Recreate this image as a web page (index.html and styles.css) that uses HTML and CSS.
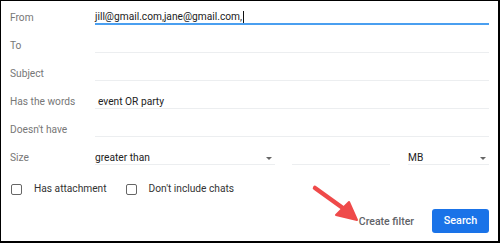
FILE: index.html
```html
<!DOCTYPE html>
<html>
<head>
<meta charset="utf-8">
<link rel="stylesheet" href="styles.css">
</head>
<body>
<div class="frame">
  <div class="rows">
    <div class="row"><span class="label">From</span><div class="field active"><span class="val">jill@gmail.com,jane@gmail.com,</span><span class="caret"></span></div></div>
    <div class="row"><span class="label">To</span><div class="field"></div></div>
    <div class="row"><span class="label">Subject</span><div class="field"></div></div>
    <div class="row"><span class="label">Has the words</span><div class="field"><span class="val words">event OR party</span></div></div>
    <div class="row"><span class="label">Doesn't have</span><div class="field"></div></div>
    <div class="row"><span class="label">Size</span>
      <div class="sizes">
        <div class="field select s1"><span class="val">greater than</span><span class="tri"></span></div>
        <div class="field s2"></div>
        <div class="field select s3"><span class="val">MB</span><span class="tri"></span></div>
      </div>
    </div>
  </div>
  <div class="checks">
    <label class="check"><span class="box"></span><span>Has attachment</span></label>
    <label class="check"><span class="box"></span><span>Don't include chats</span></label>
  </div>
  <div class="actions">
    <span class="link">Create filter</span>
    <span class="btn">Search</span>
  </div>
  <svg class="arrow" width="60" height="45" viewBox="0 0 60 45">
    <line x1="4" y1="4" x2="36" y2="27" stroke="#ef4a4a" stroke-width="4.5" stroke-linecap="round"/>
    <polygon points="46,36 25,31 38,18" fill="#ef4a4a" stroke="#ef4a4a" stroke-width="2" stroke-linejoin="round"/>
  </svg>
</div>
</body>
</html>
```
FILE: styles.css
```css
html, body { margin: 0; padding: 0; background: #fff; }
.frame {
  position: relative;
  width: 500px;
  height: 243px;
  box-sizing: border-box;
  border-style: solid;
  border-color: #000;
  border-width: 1px 2px 2px 1px;
  font-family: Roboto, "Liberation Sans", sans-serif;
  font-size: 10.2px;
  color: #222;
}
.rows {
  padding: 4px 9px 0 9px;
  display: grid;
  row-gap: 8px;
}
.row {
  display: grid;
  grid-template-columns: 85px 1fr;
  height: 20px;
  align-items: end;
}
.label {
  color: #777;
  line-height: 12px;
  padding-bottom: 1px;
}
.field {
  height: 20px;
  box-sizing: border-box;
  border-bottom: 1px solid #eceef0;
  display: flex;
  align-items: flex-end;
  line-height: 12px;
}
.field.active {
  border-bottom: 2px solid #4a9ff0;
}
.val { color: #222; }
.words { padding-left: 3px; }
.caret {
  display: inline-block;
  width: 1px;
  height: 12px;
  background: #111;
  margin-left: 1px;
}
.sizes {
  display: flex;
  align-items: end;
}
.s1 { width: 180px; justify-content: space-between; }
.s2 { width: 98px; margin-left: 17px; }
.s3 { width: 81px; margin-left: 18px; justify-content: space-between; }
.tri {
  width: 0; height: 0;
  border-left: 3px solid transparent;
  border-right: 3px solid transparent;
  border-top: 3.5px solid #666;
  margin: 0 3px 4px 0;
}
.checks {
  display: flex;
  padding: 18px 0 0 10px;
  gap: 19px;
  line-height: 12px;
}
.check {
  display: flex;
  align-items: center;
  color: #333;
  gap: 12px;
}
.box {
  width: 9px;
  height: 9px;
  border: 1.5px solid #666;
  border-radius: 2px;
}
.actions {
  display: flex;
  justify-content: flex-end;
  align-items: center;
  gap: 18px;
  padding: 14px 9px 0 0;
}
.link { color: #5f6368; font-weight: 500; font-size: 10.5px; }
.btn {
  background: #1a73e8;
  color: #fff;
  font-weight: 500;
  font-size: 10.8px;
  width: 57px;
  height: 24px;
  line-height: 24px;
  text-align: center;
  border-radius: 3px;
}
.arrow {
  position: absolute;
  left: 310px;
  top: 183px;
}
```
